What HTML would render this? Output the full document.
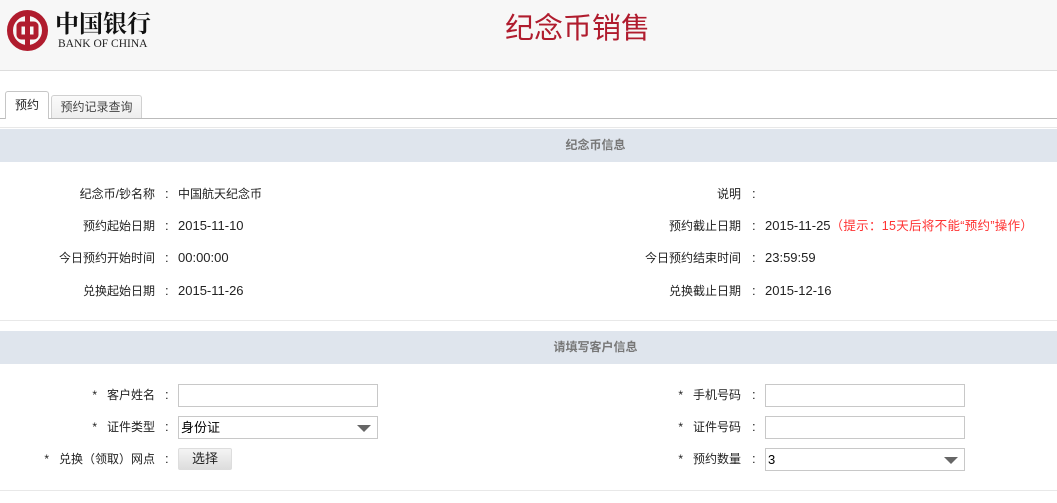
<!DOCTYPE html>
<html><head><meta charset="utf-8"><style>
*{margin:0;padding:0;box-sizing:border-box}
body{width:1057px;height:503px;position:relative;background:#fff;font-family:"Liberation Sans","Noto Sans CJK SC",sans-serif;font-size:12px;color:#222;overflow:hidden}
.a{position:absolute;white-space:nowrap}
.hdr{position:absolute;left:0;top:0;width:1057px;height:71px;background:#f7f7f7;border-bottom:1px solid #ddd}
.band{position:absolute;left:0;width:1057px;height:33px;background:#dfe5ed;color:#777;font-weight:bold;text-align:center;line-height:33px;font-size:12px;padding-left:134px}
.hl{position:absolute;left:0;width:1057px;height:1px;background:#e8e8e8}
.lbl{position:absolute;text-align:right;white-space:nowrap;line-height:16px}
.v{position:absolute;white-space:nowrap;line-height:16px;font-size:13px}
.inp{position:absolute;width:200px;height:23px;border:1px solid #c8c8c8;background:#fff;font-size:13px;line-height:21px;padding-left:2px;color:#000}
.arr{position:absolute;right:6px;top:8px;width:0;height:0;border-left:7px solid transparent;border-right:7px solid transparent;border-top:7px solid #666}
</style></head><body>
<div class="hdr"></div>
<svg class="a" style="left:7px;top:10px" width="41" height="41" viewBox="0 0 41 41">
<circle cx="20.5" cy="20.5" r="17.5" fill="none" stroke="#b01c2e" stroke-width="6"/>
<rect x="12" y="14" width="17" height="13" rx="2" fill="none" stroke="#b01c2e" stroke-width="5"/>
<rect x="18" y="2" width="5" height="37" fill="#b01c2e"/>
</svg>
<div class="a" style="left:55px;top:7px;font-size:24px;line-height:30px;font-weight:bold;color:#111;font-family:'Noto Serif CJK SC',serif">中国银行</div>
<div class="a" style="left:58px;top:38px;font-size:11.5px;font-family:'Liberation Serif',serif;color:#222">BANK OF CHINA</div>
<div class="a" style="left:505px;top:5px;font-size:29px;color:#b01c2e">纪念币销售</div>

<div class="a" style="left:0;top:118px;width:1057px;height:1px;background:#bbb"></div>
<div class="a" style="left:5px;top:91px;width:44px;height:28px;border:1px solid #c6c6c6;border-bottom:none;background:#fff;text-align:center;line-height:26px;font-size:12px;color:#222;border-radius:3px 3px 0 0">预约</div>
<div class="a" style="left:51px;top:95px;width:91px;height:23px;border:1px solid #d0d0d0;border-bottom:none;background:linear-gradient(#fafafa,#eee);text-align:center;line-height:22px;color:#444;border-radius:3px 3px 0 0;font-size:12px">预约记录查询</div>

<div class="hl" style="top:127px"></div>
<div class="band" style="top:129px">纪念币信息</div>

<div class="lbl" style="right:902px;top:186px">纪念币/钞名称</div><div class="v" style="left:165px;top:186px">:</div><div class="v" style="left:178px;top:186px;font-size:12px">中国航天纪念币</div>
<div class="lbl" style="right:902px;top:218px">预约起始日期</div><div class="v" style="left:165px;top:218px">:</div><div class="v" style="left:178px;top:218px">2015-11-10</div>
<div class="lbl" style="right:902px;top:250px">今日预约开始时间</div><div class="v" style="left:165px;top:250px">:</div><div class="v" style="left:178px;top:250px">00:00:00</div>
<div class="lbl" style="right:902px;top:283px">兑换起始日期</div><div class="v" style="left:165px;top:283px">:</div><div class="v" style="left:178px;top:283px">2015-11-26</div>

<div class="lbl" style="right:316px;top:186px">说明</div><div class="v" style="left:752px;top:186px">:</div>
<div class="lbl" style="right:316px;top:218px">预约截止日期</div><div class="v" style="left:752px;top:218px">:</div><div class="v" style="left:765px;top:218px">2015-11-25<span style="color:#f33;font-size:12.5px;letter-spacing:0.3px">（提示：15天后将不能“预约”操作）</span></div>
<div class="lbl" style="right:316px;top:250px">今日预约结束时间</div><div class="v" style="left:752px;top:250px">:</div><div class="v" style="left:765px;top:250px">23:59:59</div>
<div class="lbl" style="right:316px;top:283px">兑换截止日期</div><div class="v" style="left:752px;top:283px">:</div><div class="v" style="left:765px;top:283px">2015-12-16</div>

<div class="hl" style="top:320px"></div>
<div class="band" style="top:331px">请填写客户信息</div>

<div class="lbl" style="right:902px;top:387px">*&nbsp;&nbsp;&nbsp;客户姓名</div><div class="v" style="left:165px;top:387px">:</div>
<div class="inp" style="left:178px;top:384px"></div>
<div class="lbl" style="right:902px;top:419px">*&nbsp;&nbsp;&nbsp;证件类型</div><div class="v" style="left:165px;top:419px">:</div>
<div class="inp" style="left:178px;top:416px">身份证<div class="arr"></div></div>
<div class="lbl" style="right:902px;top:451px">*&nbsp;&nbsp;&nbsp;兑换（领取）网点</div><div class="v" style="left:165px;top:451px">:</div>
<div class="a" style="left:178px;top:448px;width:54px;height:22px;border:1px solid #ddd;border-radius:2px;background:linear-gradient(#f4f4f4,#ddd);text-align:center;line-height:20px;font-size:13px">选择</div>

<div class="lbl" style="right:316px;top:387px">*&nbsp;&nbsp;&nbsp;手机号码</div><div class="v" style="left:752px;top:387px">:</div>
<div class="inp" style="left:765px;top:384px"></div>
<div class="lbl" style="right:316px;top:419px">*&nbsp;&nbsp;&nbsp;证件号码</div><div class="v" style="left:752px;top:419px">:</div>
<div class="inp" style="left:765px;top:416px"></div>
<div class="lbl" style="right:316px;top:451px">*&nbsp;&nbsp;&nbsp;预约数量</div><div class="v" style="left:752px;top:451px">:</div>
<div class="inp" style="left:765px;top:448px">3<div class="arr"></div></div>

<div class="hl" style="top:490px"></div>
</body></html>
